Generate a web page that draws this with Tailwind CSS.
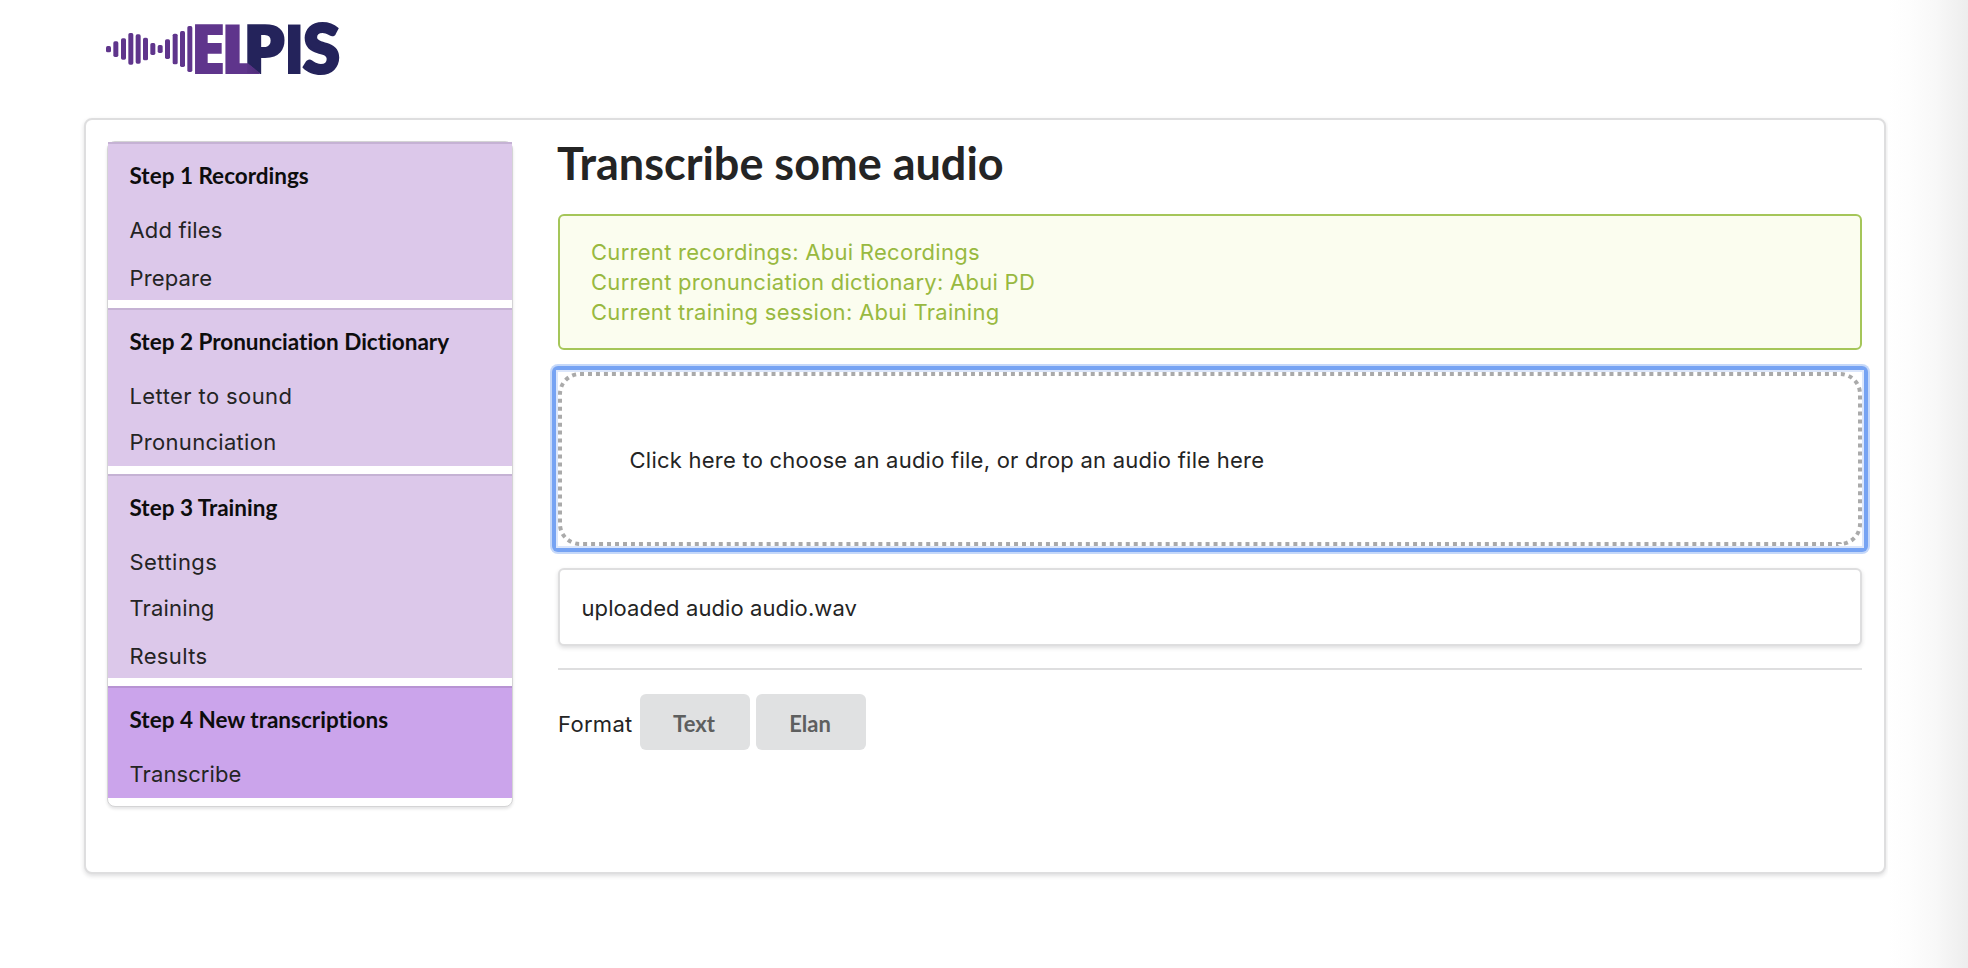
<!DOCTYPE html>
<html lang="en">
<head>
<meta charset="utf-8">
<title>Elpis</title>
<script src="https://cdn.jsdelivr.net/npm/@tailwindcss/browser@4"></script>
</head>
<body class="relative h-[968px] overflow-hidden bg-white font-['Inter',sans-serif] text-[22px] leading-[30px] text-[#242424] [font-variant-ligatures:none]">
<div class="absolute inset-y-0 right-0 w-[80px] bg-[linear-gradient(to_right,#ffffff,#fdfdfd_25%,#f8f8f8_60%,#ededed)]"></div>

<header class="h-[118px] pt-5 pl-[103px]">
  <svg class="block h-[58px] w-[240px] overflow-visible" viewBox="99 60 720 174" role="img" aria-label="Elpis">
    <defs>
      <linearGradient id="fold" gradientUnits="userSpaceOnUse" x1="515" y1="0" x2="572" y2="0"><stop offset="0" stop-color="#5f358c"/><stop offset="1" stop-color="#4d2d78"/></linearGradient>
      <clipPath id="stem"><path d="M520 50H680V235H570V220L531 188H520Z"/></clipPath>
    </defs>
    <g fill="#5f358c">
      <rect x="108" y="138" width="15" height="19" rx="5"/>
      <rect x="130" y="124" width="15" height="47" rx="5"/>
      <rect x="153" y="115" width="15" height="64" rx="5"/>
      <rect x="175" y="99" width="15" height="95" rx="5"/>
      <rect x="197" y="103" width="15" height="88" rx="5"/>
      <rect x="219" y="113" width="15" height="68" rx="5"/>
      <rect x="241" y="129" width="15" height="36" rx="5"/>
      <rect x="263" y="135" width="15" height="24" rx="5"/>
      <rect x="285" y="118" width="15" height="59" rx="5"/>
      <rect x="308" y="101" width="15" height="92" rx="5"/>
      <rect x="330" y="93" width="15" height="108" rx="5"/>
      <rect x="352" y="78" width="15" height="138" rx="5"/>
    </g>
    <g font-family="'Open Sans', sans-serif" font-weight="800" font-size="208">
      <text fill="#5f358c" transform="translate(360 221) scale(.944 1)">E</text>
      <text fill="#5f358c" transform="translate(449 221) scale(1.061 1)">L</text>
      <g clip-path="url(#stem)"><text fill="#24235b" transform="translate(515 221) scale(1.037 1)">P</text></g>
      <text fill="#24235b" transform="translate(639 221) scale(.93 1)">I</text>
    </g>
    <path d="M531 188L570 220H531Z" fill="url(#fold)"/>
    <text transform="translate(699 218) scale(1.02 1)" font-family="Lato, sans-serif" font-weight="900" font-size="197" fill="#24235b" stroke="#24235b" stroke-width="9">S</text>
  </svg>
</header>

<main class="ml-[84px] flex h-[756px] w-[1802px] rounded-lg border-2 border-[#dededf] bg-white pt-[21px] pl-[21px] shadow-[0_2px_4px_rgba(34,36,38,0.15)]">
  <nav class="h-[666px] w-[406px] rounded-[8px] border border-[#d4d4d5] bg-white shadow-[0_2px_3px_rgba(34,36,38,0.12)]">
    <section class="mb-2 h-[158px] border-t-2 border-[#c5b2d4] bg-[#dcc8ea] px-[21.5px] pt-[17px]">
      <h4 class="font-['Lato',sans-serif] text-[22.5px] font-bold text-[#0d0d0d]">Step 1 Recordings</h4>
      <p class="mt-6 tracking-[0.15px]">Add files</p>
      <p class="mt-[18px] tracking-[0.15px]">Prepare</p>
    </section>
    <section class="mb-2 h-[158px] border-t-2 border-[#c5b2d4] bg-[#dcc8ea] px-[21.5px] pt-[17px]">
      <h4 class="font-['Lato',sans-serif] text-[22.5px] font-bold text-[#0d0d0d]">Step 2 Pronunciation Dictionary</h4>
      <p class="mt-6 tracking-[0.4px]">Letter to sound</p>
      <p class="mt-4 tracking-[0.3px]">Pronunciation</p>
    </section>
    <section class="mb-2 h-[204px] border-t-2 border-[#c5b2d4] bg-[#dcc8ea] px-[21.5px] pt-[17px]">
      <h4 class="font-['Lato',sans-serif] text-[22.5px] font-bold text-[#0d0d0d]">Step 3 Training</h4>
      <p class="mt-6 tracking-[0.45px]">Settings</p>
      <p class="mt-4 tracking-[0.15px]">Training</p>
      <p class="mt-[18px] tracking-[0.35px]">Results</p>
    </section>
    <section class="h-[112px] border-t-2 border-[#b793d3] bg-[#cba4eb] px-[21.5px] pt-[17px]">
      <h4 class="font-['Lato',sans-serif] text-[22.5px] font-bold text-[#0d0d0d]">Step 4 New transcriptions</h4>
      <p class="mt-6 tracking-[0.1px]">Transcribe</p>
    </section>
  </nav>

  <div class="ml-[45px] w-[1304px]">
    <h1 class="-mt-[5px] -ml-px h-[78px] font-['Lato',sans-serif] text-[45px] leading-[54px] font-bold">Transcribe some audio</h1>

    <div class="h-[136px] rounded-md border-2 border-[#a5c659] bg-[#fbfdef] px-[31px] pt-[21px] tracking-[0.28px] text-[#98b940]">
      <p>Current recordings: Abui Recordings</p>
      <p>Current pronunciation dictionary: Abui PD</p>
      <p>Current training session: Abui Training</p>
    </div>

    <div class="relative mt-[22px] h-[174px] bg-white pt-[73px] pl-[71.5px] tracking-[0.24px]">
      <div class="absolute -inset-2 rounded-[8px] bg-[#c5d8f9]"></div>
      <div class="absolute -inset-1.5 rounded-md bg-[#76a3f3]"></div>
      <div class="absolute -inset-0.5 bg-[#dbe6fb]"></div>
      <div class="absolute inset-0 bg-white"></div>
      <svg class="absolute inset-0 h-[174px] w-[1304px]" viewBox="0 0 1304 174" fill="none"><rect x="2" y="2" width="1300" height="170" rx="20" stroke="#aaaaaa" stroke-width="4" pathLength="2912" stroke-dasharray="4 4"/></svg>
      <p class="relative">Click here to choose an audio file, or drop an audio file here</p>
    </div>

    <div class="mt-[22px] h-[78px] rounded-md border-2 border-[#dededf] bg-white pt-[23px] pl-[21.5px] tracking-[0.1px] shadow-[0_2px_4px_rgba(34,36,38,0.15)]">uploaded audio audio.wav</div>

    <div class="mt-[22px] h-[2px] bg-[#dededf]"></div>

    <div class="mt-6 flex h-[56px]">
      <span class="w-[82px] pt-[15px] tracking-[0.3px]">Format</span>
      <button class="w-[110px] rounded-md bg-[#e0e1e2] pt-1 pr-0.5 font-['Lato',sans-serif] font-bold text-[#5e5f5f]">Text</button>
      <button class="ml-1.5 w-[110px] rounded-md bg-[#e0e1e2] pt-1 pr-0.5 font-['Lato',sans-serif] font-bold text-[#5e5f5f]">Elan</button>
    </div>
  </div>
</main>
</body>
</html>
